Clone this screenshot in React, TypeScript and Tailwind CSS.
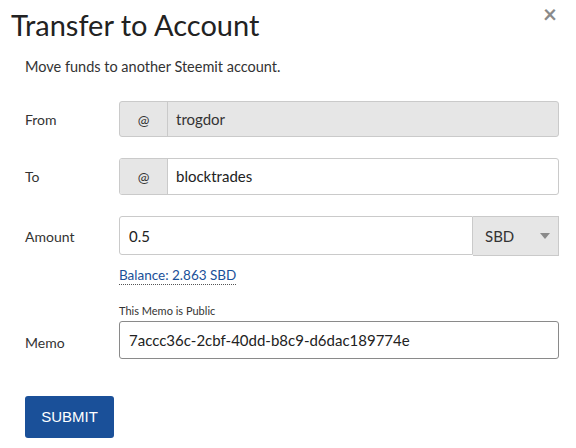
import { useState } from 'react'

const font = { fontFamily: 'Lato, "Liberation Sans", sans-serif' }

function Row({ label, children, className = '' }: { label: string; children: React.ReactNode; className?: string }) {
  return (
    <div className={`flex items-center ${className}`}>
      <div className="w-[94px] text-[14px] text-[#333]">{label}</div>
      <div className="w-[440px]">{children}</div>
    </div>
  )
}

export default function App() {
  const [to, setTo] = useState('blocktrades')
  const [amount, setAmount] = useState('0.5')
  const [memo, setMemo] = useState('7accc36c-2cbf-40dd-b8c9-d6dac189774e')

  return (
    <div className="relative w-[576px] h-[448px] bg-white text-[#333] overflow-hidden" style={font}>
      <button className="absolute right-[19px] top-[2px] text-[24px] leading-none text-[#8a8a8a] font-bold">
        ×
      </button>

      <h1 className="pl-[11px] pt-[7px] text-[29px] leading-[36px] text-[#222]">Transfer to Account</h1>

      <div className="pl-[25px]">
        <p className="mt-[14px] text-[14.5px] leading-[20px]">Move funds to another Steemit account.</p>

        <Row label="From" className="mt-[24px]">
          <div className="flex h-[36px] rounded-[3px] border border-[#cacaca] bg-[#e6e6e6] overflow-hidden">
            <span className="w-[48px] flex items-center justify-center border-r border-[#cacaca] text-[14px]">@</span>
            <span className="flex items-center pl-[8px] text-[15px] text-[#333]">trogdor</span>
          </div>
        </Row>

        <Row label="To" className="mt-[21px]">
          <div className="flex h-[37px] rounded-[3px] border border-[#cacaca] bg-white overflow-hidden">
            <span className="w-[48px] flex items-center justify-center border-r border-[#cacaca] bg-[#e6e6e6] text-[14px]">@</span>
            <input
              value={to}
              onChange={(e) => setTo(e.target.value)}
              className="flex-1 pl-[8px] text-[15px] text-[#222] outline-none"
            />
          </div>
        </Row>

        <div className="flex mt-[21px]">
          <div className="w-[94px] pt-[10px] text-[14px]">Amount</div>
          <div className="w-[440px]">
            <div className="flex h-[40px]">
              <input
                value={amount}
                onChange={(e) => setAmount(e.target.value)}
                className="w-[354px] h-[39px] rounded-l-[3px] border border-[#cacaca] pl-[9px] text-[15px] text-[#222] outline-none"
              />
              <div className="flex-1 flex items-center justify-between border border-l-0 border-[#cacaca] bg-[#e6e6e6] pl-[12px] pr-[8px] text-[15px]">
                <span>SBD</span>
                <svg width="10" height="6" viewBox="0 0 10 6">
                  <path d="M0 0h10L5 6z" fill="#8a8a8a" />
                </svg>
              </div>
            </div>
            <div className="mt-[6px]">
              <span className="text-[13.5px] text-[#1a5099] border-b border-dotted border-[#555] pb-[1px]">
                Balance: 2.863 SBD
              </span>
            </div>
          </div>
        </div>

        <div className="flex mt-[18px]">
          <div className="w-[94px] pt-[28px] text-[14px]">Memo</div>
          <div className="w-[440px]">
            <div className="text-[11px] leading-[14px] text-[#333]">This Memo is Public</div>
            <input
              value={memo}
              onChange={(e) => setMemo(e.target.value)}
              className="mt-[3px] w-full h-[38px] rounded-[3px] border border-[#8a8a8a] pl-[9px] text-[15px] text-[#222] outline-none"
            />
          </div>
        </div>

        <button className="mt-[37px] w-[89px] h-[42px] rounded-[3px] bg-[#1a5099] text-white text-[15px]" style={{ fontFamily: '"Liberation Sans", Arial, sans-serif' }}>
          SUBMIT
        </button>
      </div>
    </div>
  )
}
